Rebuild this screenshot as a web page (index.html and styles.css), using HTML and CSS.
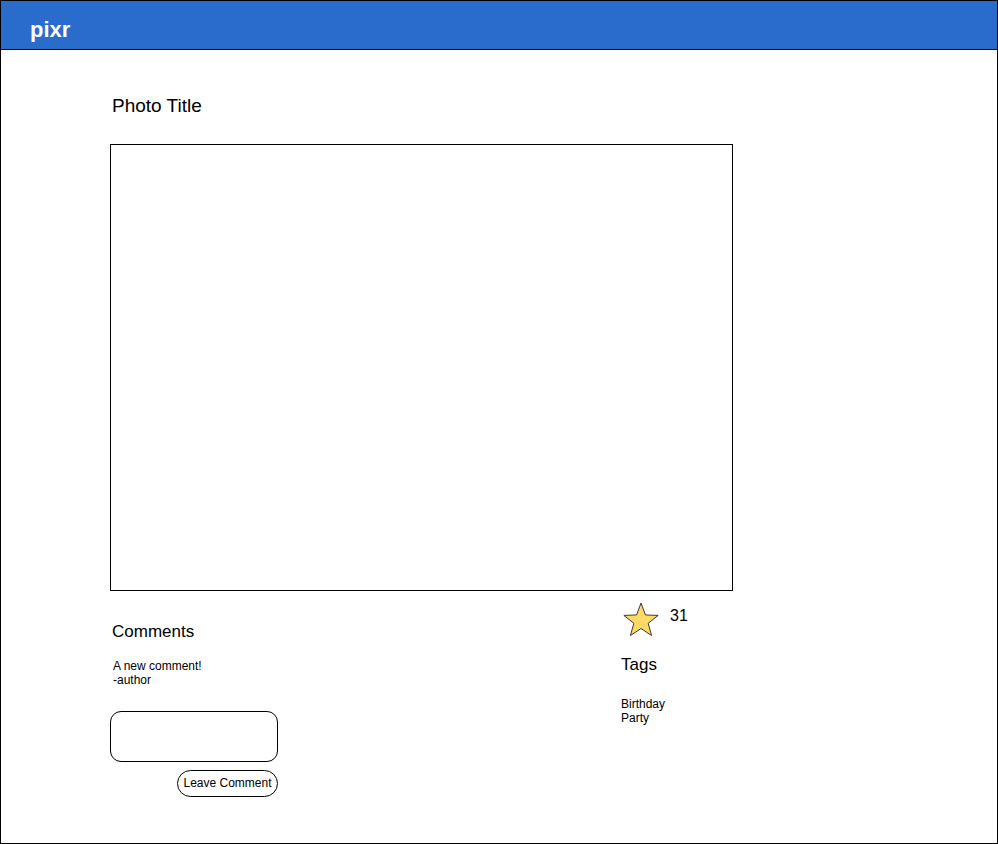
FILE: index.html
```html
<!DOCTYPE html>
<html lang="en">
<head>
<meta charset="utf-8">
<title>pixr</title>
<link rel="stylesheet" href="styles.css">
</head>
<body>
<div class="page">
  <header class="topbar">
    <span class="logo">pixr</span>
  </header>
  <main class="content">
    <h1 class="photo-title">Photo Title</h1>
    <div class="photo"></div>
    <div class="below">
      <section class="comments">
        <h2 class="heading">Comments</h2>
        <div class="comment">
          <div>A new comment!</div>
          <div>-author</div>
        </div>
        <div class="comment-form">
          <textarea class="comment-input"></textarea>
          <button class="comment-btn" type="button">Leave Comment</button>
        </div>
      </section>
      <aside class="side">
        <div class="rating">
          <svg class="star" width="36" height="36" viewBox="0 0 36 36">
            <polygon points="18,1 22.41,12.93 35.12,13.44 25.13,21.32 28.58,33.56 18,26.5 7.42,33.56 10.87,21.32 0.88,13.44 13.59,12.93" fill="#ffd966" stroke="#3a3a3a" stroke-width="1" stroke-linejoin="miter"/>
          </svg>
          <span class="count">31</span>
        </div>
        <h2 class="heading tags-heading">Tags</h2>
        <ul class="tags">
          <li>Birthday</li>
          <li>Party</li>
        </ul>
      </aside>
    </div>
  </main>
</div>
</body>
</html>
```

FILE: styles.css
```css
* { box-sizing: border-box; }
html, body {
  margin: 0;
  padding: 0;
  background: #fff;
  font-family: "Liberation Sans", Arial, sans-serif;
  color: #000;
}
.page {
  width: 998px;
  height: 844px;
  border: 1px solid #000;
  overflow: hidden;
}
.topbar {
  height: 49px;
  background: #2a6ccc;
  border-bottom: 1px solid #000;
  display: flex;
  align-items: center;
  padding-left: 29px;
}
.logo {
  color: #fff;
  font-weight: bold;
  font-size: 22px;
  line-height: 24px;
  margin-top: 10px;
}
.content {
  padding: 44px 0 0 109px;
}
.photo-title {
  margin: 0 0 26px 2px;
  font-size: 19px;
  font-weight: normal;
  line-height: 24px;
}
.photo {
  width: 623px;
  height: 447px;
  border: 1px solid #000;
}
.below {
  width: 623px;
  display: flex;
}
.comments {
  width: 511px;
  padding-top: 31px;
}
.heading {
  margin: 0;
  font-size: 17px;
  font-weight: normal;
  line-height: 20px;
  padding-left: 2px;
}
.comment {
  margin-top: 17px;
  padding-left: 3px;
  font-size: 12px;
  line-height: 14px;
}
.comment-form {
  width: 168px;
  margin-top: 24px;
  display: flex;
  flex-direction: column;
  align-items: flex-end;
}
.comment-input {
  display: block;
  width: 168px;
  height: 51px;
  border: 1px solid #000;
  border-radius: 11px;
  resize: none;
  background: #fff;
  margin: 0;
}
.comment-btn {
  margin-top: 8px;
  width: 101px;
  height: 27px;
  border: 1px solid #000;
  border-radius: 14px;
  background: #fff;
  font-family: "Liberation Sans", Arial, sans-serif;
  font-size: 12px;
  line-height: 14px;
  color: #000;
  padding: 0 0 2px 0;
}
.side {
  flex: 1;
  padding-top: 11px;
}
.rating {
  display: flex;
  align-items: flex-start;
  padding-left: 2px;
}
.star {
  display: block;
}
.count {
  margin-left: 11px;
  margin-top: 5px;
  font-size: 16px;
  line-height: 18px;
}
.tags-heading {
  margin-top: 17px;
  padding-left: 0;
}
.tags {
  list-style: none;
  margin: 22px 0 0 0;
  padding: 0;
  font-size: 12px;
  line-height: 14px;
}
```
